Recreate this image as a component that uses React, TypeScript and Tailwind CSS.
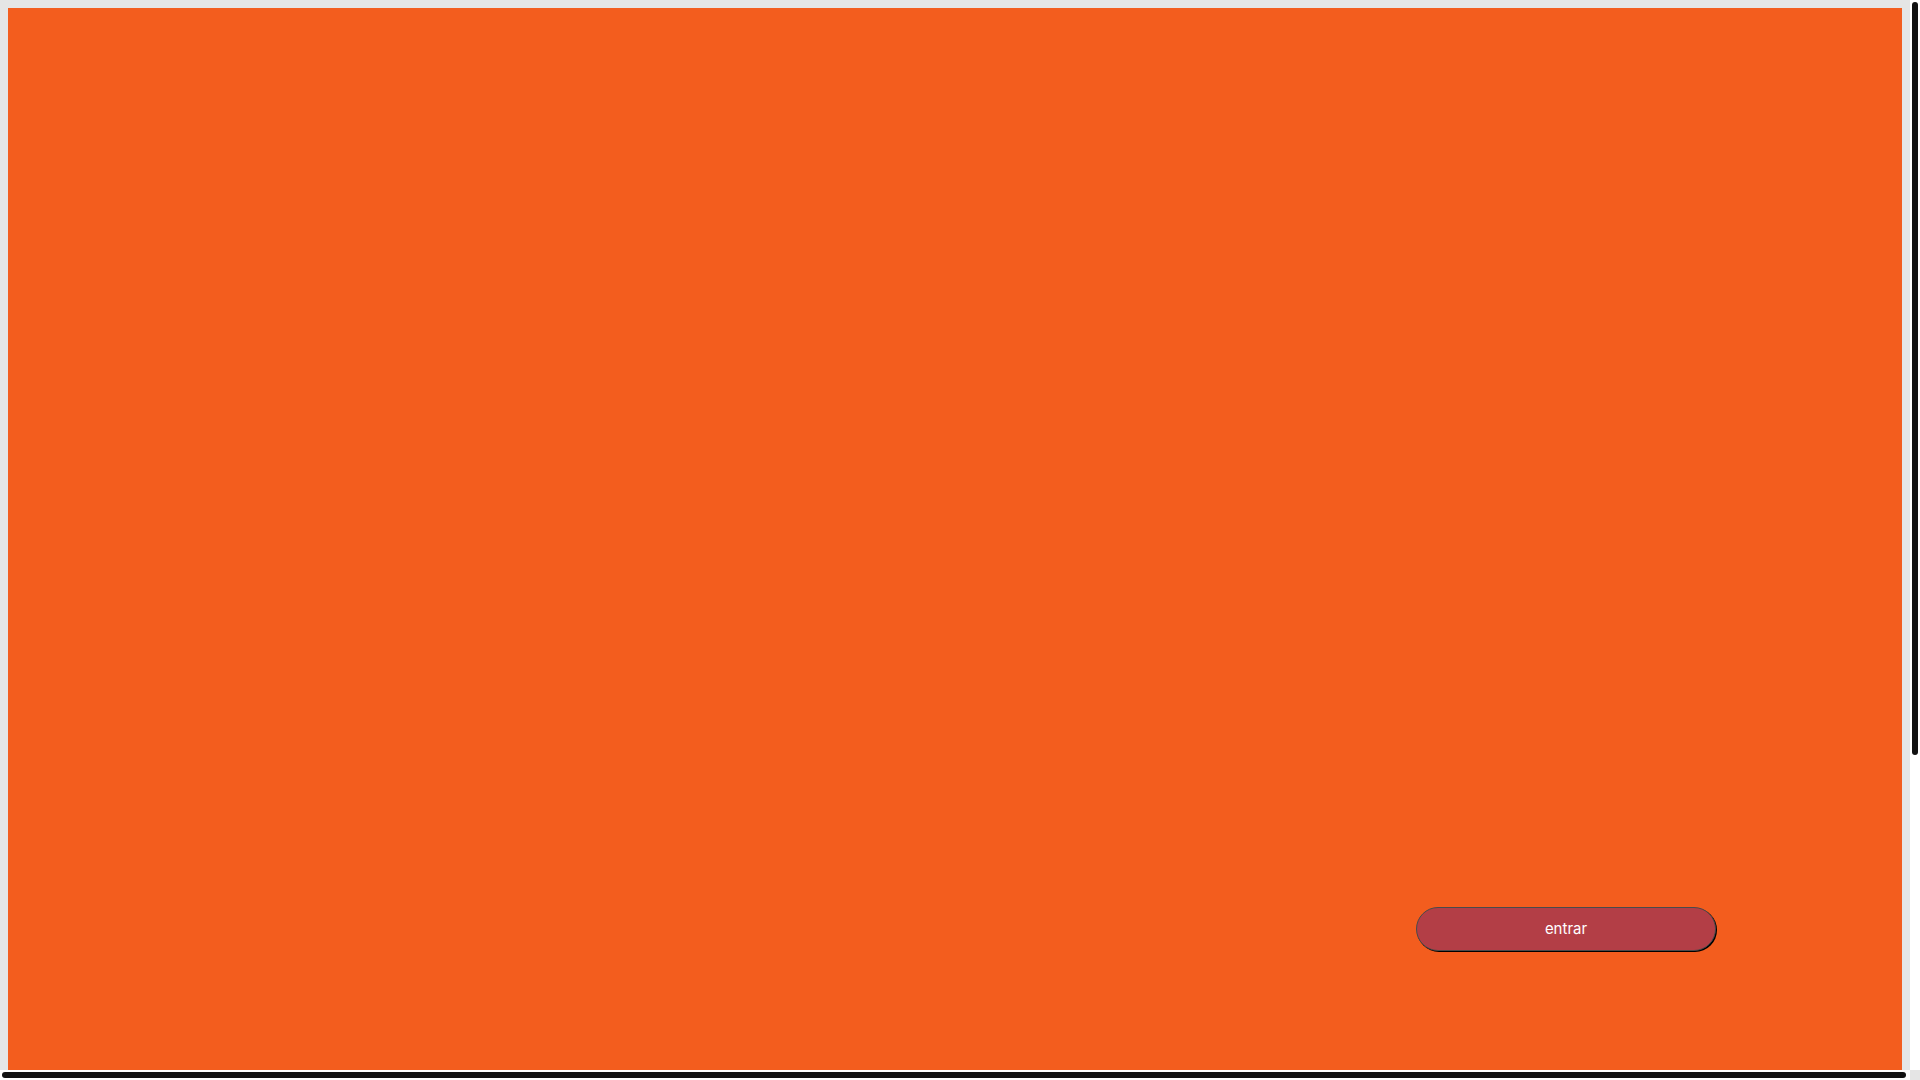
export default function App() {
  return (
    <div className="flex h-screen w-screen flex-col overflow-hidden bg-white" style={{ fontFamily: 'Inter, "Noto Sans", sans-serif' }}>
      <div className="flex min-h-0 flex-1">
        <div className="flex min-w-0 flex-1 bg-[#e5e5e5] pl-2 pr-2 pt-2">
          <div className="flex flex-1 items-end justify-end bg-[#f35d1e] pb-[119px] pr-[186px]">
            <button className="flex h-[44px] w-[300px] items-center justify-center rounded-full border border-[#4a4a4a] bg-[#b33e46] text-[15px] text-white shadow-[1px_1px_0_0_#000]">
              entrar
            </button>
          </div>
        </div>
        <div className="w-[10px] bg-white px-[2px] pt-[2px]">
          <div className="h-[753px] rounded-full bg-[#111111]" />
        </div>
      </div>
      <div className="flex h-[10px]">
        <div className="flex flex-1 bg-white py-[2px] pl-[2px]">
          <div className="h-full w-[1904px] rounded-full bg-[#111111]" />
        </div>
        <div className="w-[10px] bg-[#e5e5e5]" />
      </div>
    </div>
  );
}
